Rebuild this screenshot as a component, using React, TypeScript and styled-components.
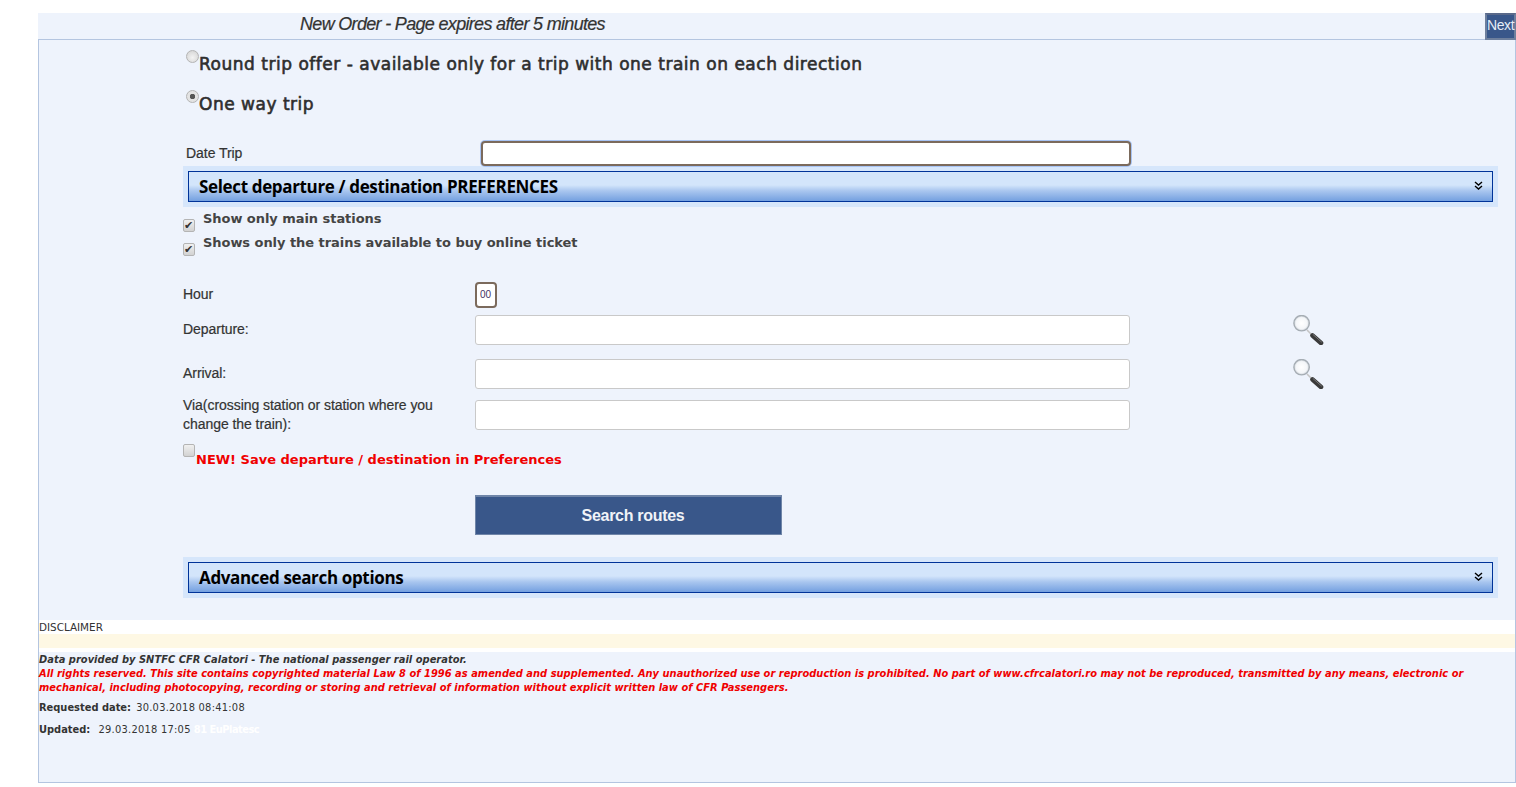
import styled, { createGlobalStyle } from 'styled-components';

const GlobalStyle = createGlobalStyle`
  html, body {
    margin: 0;
    padding: 0;
    background: #fff;
  }
  body {
    font-family: "Liberation Sans", Arial, sans-serif;
    color: #333;
  }
`;

const MagnifierIcon = () => (
  <MagnifierSvg viewBox="0 0 32 30" width="32" height="30">
    <defs>
      <radialGradient id="lens" cx="50%" cy="50%" r="50%">
        <stop offset="0%" stopColor="#fff" />
        <stop offset="72%" stopColor="#f4f6f9" />
        <stop offset="100%" stopColor="#ccd2d8" />
      </radialGradient>
    </defs>
    <line x1="15" y1="15" x2="20" y2="20" stroke="#c4c4c4" strokeWidth="1.6" />
    <line x1="20.5" y1="20.5" x2="29" y2="28" stroke="#3a3a3a" strokeWidth="4.6" strokeLinecap="round" />
    <line x1="21" y1="19.5" x2="29.5" y2="27" stroke="#777" strokeWidth="1" strokeLinecap="round" />
    <circle cx="9.6" cy="8.2" r="7.7" fill="url(#lens)" stroke="#a6adb4" strokeWidth="1.4" />
  </MagnifierSvg>
);

const Chevrons = () => (
  <ChevronSvg viewBox="0 0 9 9" width="9" height="9">
    <path d="M1 1l3.5 3L8 1M1 5l3.5 3L8 5" fill="none" stroke="#000" strokeWidth="1.4" />
  </ChevronSvg>
);

const App = () => {
  return (
    <>
      <GlobalStyle />
      <Page>
        <Header>
          <Title>New Order - Page expires after 5 minutes</Title>
          <NextButton type="button">Next</NextButton>
        </Header>
        <Panel>
          <RadioRow>
            <Radio type="radio" name="trip" />
            <RadioText>Round trip offer - available only for a trip with one train on each direction</RadioText>
          </RadioRow>
          <RadioRow>
            <Radio type="radio" name="trip" defaultChecked />
            <RadioText>One way trip</RadioText>
          </RadioRow>

          <DateRow>
            <DateLabel>Date Trip</DateLabel>
            <DateInput type="text" />
          </DateRow>

          <AccordionOuter>
            <AccordionBar>
              <span>Select departure / destination PREFERENCES</span>
              <Chevrons />
            </AccordionBar>
          </AccordionOuter>

          <CheckList>
            <CheckRow>
              <Check type="checkbox" defaultChecked />
              <CheckText>Show only main stations</CheckText>
            </CheckRow>
            <CheckRow>
              <Check type="checkbox" defaultChecked />
              <CheckText>Shows only the trains available to buy online ticket</CheckText>
            </CheckRow>
          </CheckList>

          <FormGrid>
            <HourRow>
              <DateLabel>Hour</DateLabel>
              <HourSelect defaultValue="00">
                <option value="00">00</option>
              </HourSelect>
            </HourRow>
            <StationRow $height={44}>
              <FieldLabel>Departure:</FieldLabel>
              <StationInput type="text" />
              <MagnifierIcon />
            </StationRow>
            <StationRow $height={41}>
              <FieldLabel>Arrival:</FieldLabel>
              <StationInput type="text" />
              <MagnifierIcon />
            </StationRow>
            <StationRow $height={44}>
              <ViaLabel>Via(crossing station or station where you change the train):</ViaLabel>
              <StationInput type="text" />
            </StationRow>
          </FormGrid>

          <SaveRow>
            <Check type="checkbox" />
            <SaveText>NEW! Save departure / destination in Preferences</SaveText>
          </SaveRow>

          <SearchWrap>
            <SearchButton type="button">Search routes</SearchButton>
          </SearchWrap>

          <AccordionOuter>
            <AccordionBar>
              <span>Advanced search options</span>
              <Chevrons />
            </AccordionBar>
          </AccordionOuter>

          <Disclaimer>
            <DisclaimerTitle>DISCLAIMER</DisclaimerTitle>
            <CreamBand />
            <WhiteStrip />
          </Disclaimer>

          <Legal>
            <LegalDark>Data provided by SNTFC CFR Calatori - The national passenger rail operator.</LegalDark>
            <LegalRed>
              All rights reserved. This site contains copyrighted material Law 8 of 1996 as amended and supplemented. Any
              unauthorized use or reproduction is prohibited. No part of www.cfrcalatori.ro may not be reproduced,
              transmitted by any means, electronic or mechanical, including photocopying, recording or storing and
              retrieval of information without explicit written law of CFR Passengers.
            </LegalRed>
            <MetaRow $top={6}>
              <MetaKey>Requested date:</MetaKey> <MetaValue>30.03.2018 08:41:08</MetaValue>
            </MetaRow>
            <MetaRow $top={8}>
              <MetaKey>Updated:</MetaKey>&nbsp; <MetaValue>29.03.2018 17:05</MetaValue> <Faint>81 EuPlatesc</Faint>
            </MetaRow>
          </Legal>
        </Panel>
      </Page>
    </>
  );
};

const Page = styled.div`
  margin: 13px 0 0 38px;
  width: 1478px;
`;

const Header = styled.div`
  display: flex;
  justify-content: space-between;
  align-items: stretch;
  height: 26px;
  background: #eef3fc;
  border-bottom: 1px solid #b4c5e0;
`;

const Title = styled.div`
  padding-left: 262px;
  font-size: 18px;
  font-style: italic;
  line-height: 23px;
  letter-spacing: -0.68px;
  color: #333;
  -webkit-text-stroke: 0.2px #333;
`;

const NextButton = styled.button`
  width: 31px;
  height: 27px;
  margin: 0;
  padding: 0 0 4px;
  box-sizing: border-box;
  background: #39578a;
  border: 2px solid #6d7f9d;
  border-top-color: #59698a;
  color: #e6edf7;
  font-family: "Liberation Sans", Arial, sans-serif;
  font-size: 14px;
  letter-spacing: -0.4px;
`;

const Panel = styled.div`
  box-sizing: border-box;
  height: 743px;
  background: #eef3fc;
  border: 1px solid #b4c5e0;
  border-top: 0;
`;

const RadioRow = styled.label`
  display: flex;
  align-items: flex-start;
  height: 40px;
  padding: 10px 0 0 147px;
  box-sizing: border-box;
`;

const Radio = styled.input`
  appearance: none;
  width: 13px;
  height: 13px;
  margin: 0;
  flex: none;
  box-sizing: border-box;
  border: 1px solid #b4b4b4;
  border-radius: 50%;
  background: radial-gradient(circle at 50% 60%, #f3f3f3, #d0d0d0);

  &:checked {
    background: radial-gradient(circle, #555 0 2.5px, #e3e3e3 3px);
  }
`;

const RadioText = styled.span`
  margin-top: 3px;
  font-family: "DejaVu Sans", Verdana, sans-serif;
  font-size: 17px;
  font-weight: 500;
  line-height: 22px;
  letter-spacing: 0.51px;
  color: #2e2e2e;
  -webkit-text-stroke: 0.6px #2e2e2e;
`;

const FieldLabel = styled.span`
  font-size: 14px;
  letter-spacing: -0.05px;
  color: #333;
  -webkit-text-stroke: 0.2px #333;
`;

const DateLabel = styled(FieldLabel)`
  margin-top: -1px;
`;

const DateRow = styled.div`
  display: grid;
  grid-template-columns: 295px 650px;
  align-items: center;
  height: 26px;
  margin-top: 20px;
  padding-left: 147px;
`;

const DateInput = styled.input`
  box-sizing: border-box;
  width: 650px;
  height: 25px;
  padding: 0 6px;
  background: #fff;
  border: 2px solid #7b6a5c;
  border-radius: 4px;
  box-shadow: 0 0 0 1px #a8c4f4;
  outline: 0;
`;

const AccordionOuter = styled.div`
  box-sizing: border-box;
  width: 1315px;
  height: 41px;
  margin-left: 144px;
  padding: 5px;
  background: #d6e6fb;
`;

const AccordionBar = styled.div`
  box-sizing: border-box;
  display: flex;
  justify-content: space-between;
  align-items: center;
  height: 31px;
  padding: 0 9px 0 10px;
  border: 1px solid #003399;
  background: linear-gradient(#d3e5fb 0%, #d3e5fb 45%, #a9c6ef 65%, #74a0e0 100%);
  font-family: "Open Sans", Verdana, sans-serif;
  font-size: 17px;
  font-weight: 700;
  letter-spacing: -0.35px;
  color: #000;
`;

const ChevronSvg = styled.svg`
  display: block;
  margin-top: -3px;
`;

const CheckList = styled.div`
  padding: 3px 0 0 144px;
`;

const CheckRow = styled.label`
  display: flex;
  align-items: flex-start;
  height: 24px;
`;

const Check = styled.input`
  appearance: none;
  position: relative;
  flex: none;
  box-sizing: border-box;
  width: 12px;
  height: 13px;
  margin: 9px 8px 0 0;
  background: linear-gradient(#f0f0f0, #d2d2d2);
  border: 1px solid #b4b4b4;
  border-radius: 2px;

  &:checked::after {
    content: '✔';
    position: absolute;
    left: 0;
    top: 0;
    font-size: 11px;
    line-height: 11px;
    color: #333;
    font-family: "DejaVu Sans", sans-serif;
  }
`;

const CheckText = styled.span`
  font-family: "DejaVu Sans", Verdana, sans-serif;
  font-size: 13px;
  font-weight: 700;
  line-height: 16px;
  margin-top: 1px;
  letter-spacing: -0.05px;
  color: #444;
`;

const FormGrid = styled.div`
  margin-top: 20px;
  padding-left: 144px;
`;

const HourRow = styled.div`
  display: grid;
  grid-template-columns: 292px 22px;
  align-items: center;
  height: 33px;
  margin-bottom: 4px;
`;

const HourSelect = styled.select`
  appearance: none;
  box-sizing: border-box;
  width: 22px;
  height: 26px;
  padding: 0 0 0 3px;
  background: #fff;
  border: 2px solid #7b6a5c;
  border-radius: 4px;
  font-family: "Liberation Sans", Arial, sans-serif;
  font-size: 10px;
  color: #443366;
`;

const StationRow = styled.div<{ $height: number }>`
  display: grid;
  grid-template-columns: 292px 655px 162px 32px;
  align-items: start;
  height: ${(p) => p.$height}px;

  & > span {
    padding-top: 6px;
  }
`;

const ViaLabel = styled(FieldLabel)`
  width: 270px;
  line-height: 19px;
  && {
    padding-top: 0;
  }
  margin-top: -4px;
`;

const StationInput = styled.input`
  box-sizing: border-box;
  width: 655px;
  height: 30px;
  grid-column: 2;
  background: #fff;
  border: 1px solid #c9c9c9;
  border-radius: 3px;
  outline: 0;
`;

const MagnifierSvg = styled.svg`
  grid-column: 4;
  display: block;
`;

const SaveRow = styled.label`
  display: flex;
  align-items: flex-start;
  height: 51px;
  padding-left: 144px;

  & > input {
    margin: 0 1px 0 0;
    width: 12px;
  }
`;

const SaveText = styled.span`
  margin-top: 8px;
  font-family: "DejaVu Sans", Verdana, sans-serif;
  font-size: 13px;
  font-weight: 700;
  line-height: 16px;
  color: #f00000;
`;

const SearchWrap = styled.div`
  padding-left: 436px;
  height: 62px;
`;

const SearchButton = styled.button`
  box-sizing: border-box;
  width: 307px;
  height: 40px;
  margin: 0;
  padding: 0 0 0 9px;
  background: #39578a;
  border: 1px solid #6f85a8;
  border-top-width: 2px;
  color: #f0f3f8;
  font-family: "Liberation Sans", Arial, sans-serif;
  font-size: 16px;
  font-weight: 700;
  letter-spacing: -0.3px;
`;

const Disclaimer = styled.div`
  margin-top: 22px;
`;

const DisclaimerTitle = styled.div`
  height: 14px;
  background: #fff;
  font-family: "DejaVu Sans", Verdana, sans-serif;
  font-size: 10.4px;
  line-height: 15px;
  color: #333;
`;

const CreamBand = styled.div`
  height: 14px;
  background: #fef8e4;
`;

const WhiteStrip = styled.div`
  height: 4px;
  background: #fff;
`;

const Legal = styled.div`
  font-family: "DejaVu Sans", Verdana, sans-serif;
  font-size: 9.9px;
  line-height: 14px;
  padding-top: 1px;
`;

const LegalDark = styled.div`
  font-weight: 700;
  font-style: italic;
  letter-spacing: 0.03px;
  color: #333;
`;

const LegalRed = styled.div`
  font-weight: 700;
  font-style: italic;
  letter-spacing: 0.03px;
  color: #f00000;
`;

const MetaRow = styled.div<{ $top: number }>`
  margin-top: ${(p) => p.$top}px;
  color: #333;
`;

const MetaKey = styled.b`
  margin-right: 2px;
`;

const MetaValue = styled.span`
  letter-spacing: 0.25px;
`;

const Faint = styled.span`
  color: #fff;
  font-weight: 700;
  letter-spacing: -0.5px;
`;

export default App;
